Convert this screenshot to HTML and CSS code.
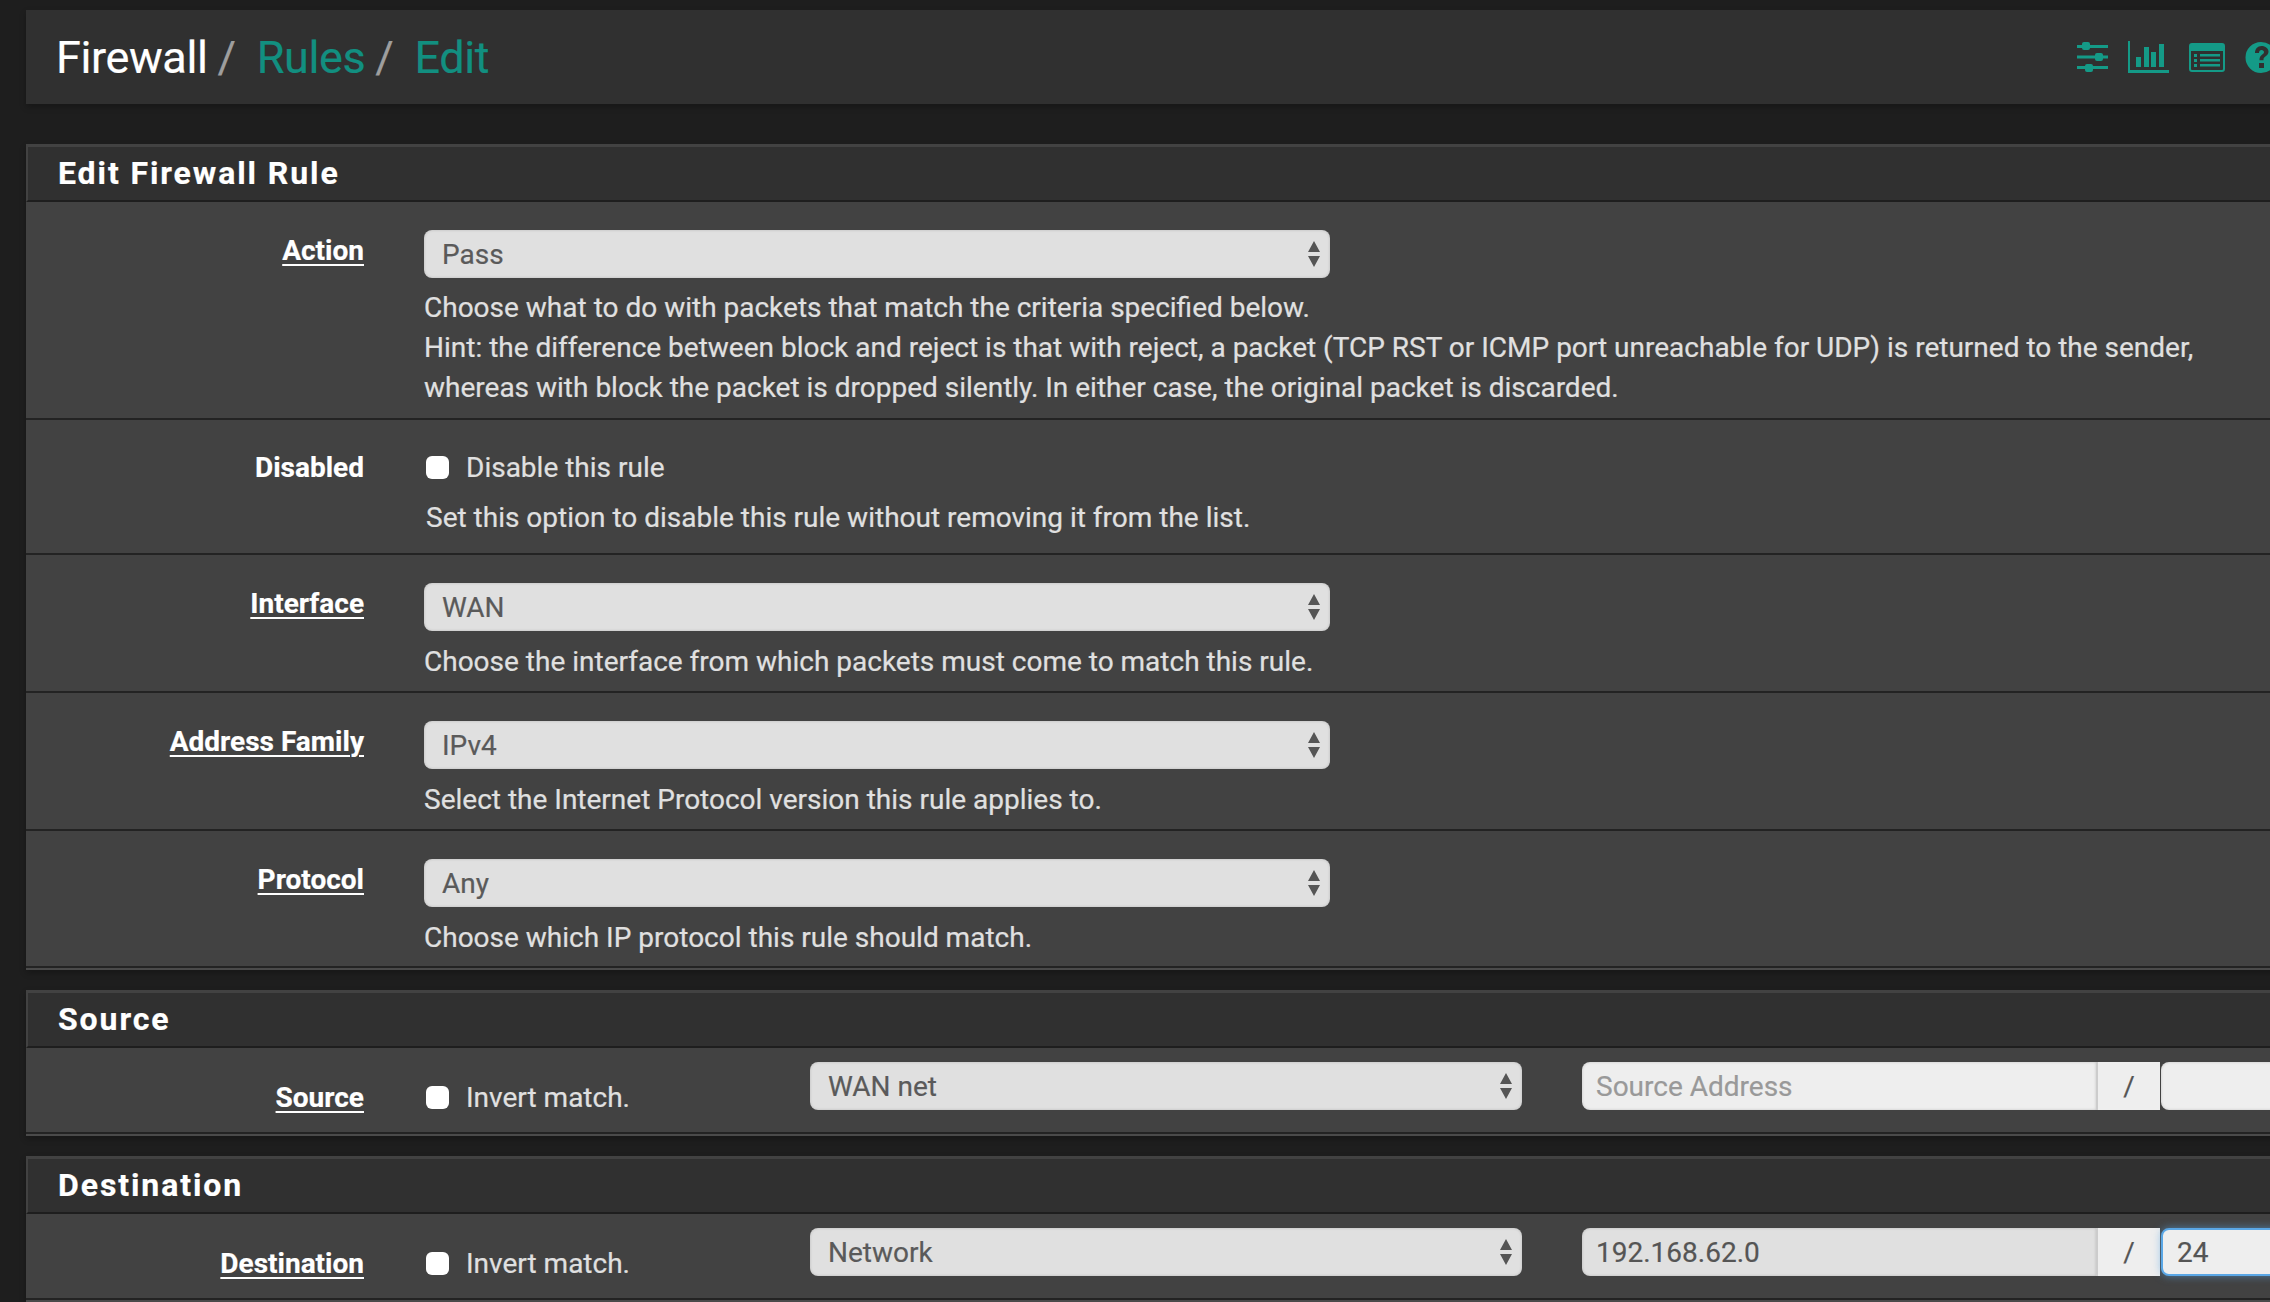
FILE: index.html
```html
<!DOCTYPE html>
<html lang="en">
<head>
<meta charset="utf-8">
<title>Firewall / Rules / Edit</title>
<link rel="stylesheet" href="styles.css">
</head>
<body>
<div class="page">
  <header class="bar">
    <h1 class="crumbs"><span class="crumb-root">Firewall</span><span class="sep">/</span><a class="crumb">Rules</a><span class="sep">/</span><a class="crumb">Edit</a></h1>
    <div class="icons">
      <svg class="ico" width="31" height="30" viewBox="0 0 31 30"><path d="M0 3h31v3H0zM0 13.500h31v3H0zM0 24h31v3H0z"/><rect x="5" y="0" width="8" height="8" rx="2"/><rect x="18" y="11" width="8" height="8" rx="2"/><rect x="8" y="22" width="8" height="8" rx="2"/></svg>
      <svg class="ico" width="41" height="32" viewBox="0 0 41 32"><path d="M0 0h2v29h39v3H0z"/><rect x="8" y="16" width="5" height="10"/><rect x="16" y="6" width="5" height="20"/><rect x="23" y="11" width="5" height="15"/><rect x="31" y="3" width="5" height="23"/></svg>
      <svg class="ico" width="36" height="29" viewBox="0 0 36 29"><path fill-rule="evenodd" d="M3 0h30a3 3 0 0 1 3 3v23a3 3 0 0 1-3 3H3a3 3 0 0 1-3-3V3a3 3 0 0 1 3-3zM2 8v18a1 1 0 0 0 1 1h30a1 1 0 0 0 1-1V8z"/><path d="M5 11h3v3H5zM11 11h20v2.500H11zM5 16h3v3H5zM11 16h20v2.500H11zM5 21h3v3H5zM11 21h20v2.500H11z"/></svg>
      <svg class="ico" width="32" height="31" viewBox="0 0 32 31"><path fill-rule="evenodd" d="M16 0a15.500 15.500 0 1 1 0 31a15.500 15.500 0 0 1 0-31zM10 11h4c0-2 1-3 2.500-3s2.500 1 2.500 2.200c0 2-4.500 3-4.500 7v1h4v-1c0-2.500 5-3.500 5-7.500C23.500 6.500 20.500 4 16.500 4S10 7 10 11zM14 21v5h5v-5z"/></svg>
    </div>
  </header>

  <section class="panel panel-first">
    <h2 class="panel-head">Edit Firewall Rule</h2>
    <div class="row row-action">
      <div class="label"><u>Action</u></div>
      <div class="field">
        <div class="select-wrap select-main">
          <select class="select"><option>Pass</option></select>
          <svg class="arrows" width="14" height="27" viewBox="0 0 14 27"><path d="M7 0l6 11H1zM1 15h12L7 26z"/></svg>
        </div>
        <p class="help help-action">Choose what to do with packets that match the criteria specified below.<br>Hint: the difference between block and reject is that with reject, a packet (TCP RST or ICMP port unreachable for UDP) is returned to the sender,<br>whereas with block the packet is dropped silently. In either case, the original packet is discarded.</p>
      </div>
    </div>
    <div class="row row-disabled">
      <div class="label">Disabled</div>
      <div class="field">
        <label class="check"><input type="checkbox" class="box"><span>Disable this rule</span></label>
        <p class="help help-check">Set this option to disable this rule without removing it from the list.</p>
      </div>
    </div>
    <div class="row">
      <div class="label"><u>Interface</u></div>
      <div class="field">
        <div class="select-wrap select-main">
          <select class="select"><option>WAN</option></select>
          <svg class="arrows" width="14" height="27" viewBox="0 0 14 27"><path d="M7 0l6 11H1zM1 15h12L7 26z"/></svg>
        </div>
        <p class="help">Choose the interface from which packets must come to match this rule.</p>
      </div>
    </div>
    <div class="row">
      <div class="label"><u>Address Family</u></div>
      <div class="field">
        <div class="select-wrap select-main">
          <select class="select"><option>IPv4</option></select>
          <svg class="arrows" width="14" height="27" viewBox="0 0 14 27"><path d="M7 0l6 11H1zM1 15h12L7 26z"/></svg>
        </div>
        <p class="help">Select the Internet Protocol version this rule applies to.</p>
      </div>
    </div>
    <div class="row row-last">
      <div class="label"><u>Protocol</u></div>
      <div class="field">
        <div class="select-wrap select-main">
          <select class="select"><option>Any</option></select>
          <svg class="arrows" width="14" height="27" viewBox="0 0 14 27"><path d="M7 0l6 11H1zM1 15h12L7 26z"/></svg>
        </div>
        <p class="help">Choose which IP protocol this rule should match.</p>
      </div>
    </div>
  </section>

  <section class="panel">
    <h2 class="panel-head">Source</h2>
    <div class="row row-net">
      <div class="label label-net"><u>Source</u></div>
      <div class="field field-net">
        <label class="check check-net"><input type="checkbox" class="box"><span>Invert match.</span></label>
        <div class="select-wrap select-net">
          <select class="select"><option>WAN net</option></select>
          <svg class="arrows" width="14" height="27" viewBox="0 0 14 27"><path d="M7 0l6 11H1zM1 15h12L7 26z"/></svg>
        </div>
        <div class="addr">
          <input class="input input-addr input-light" type="text" placeholder="Source Address">
          <span class="addon">/</span>
          <input class="input input-mask input-light" type="text">
        </div>
      </div>
    </div>
  </section>

  <section class="panel">
    <h2 class="panel-head">Destination</h2>
    <div class="row row-net">
      <div class="label label-net"><u>Destination</u></div>
      <div class="field field-net">
        <label class="check check-net"><input type="checkbox" class="box"><span>Invert match.</span></label>
        <div class="select-wrap select-net">
          <select class="select"><option>Network</option></select>
          <svg class="arrows" width="14" height="27" viewBox="0 0 14 27"><path d="M7 0l6 11H1zM1 15h12L7 26z"/></svg>
        </div>
        <div class="addr">
          <input class="input input-addr" type="text" value="192.168.62.0">
          <span class="addon">/</span>
          <input class="input input-mask input-focus input-light" type="text" value="24">
        </div>
      </div>
    </div>
  </section>
</div>
</body>
</html>
```

FILE: styles.css
```css
* { box-sizing: border-box; }
html, body { margin: 0; padding: 0; height: 1302px; overflow: hidden; background: #1e1e1e; }
body { font-family: Roboto, "Liberation Sans", sans-serif; color: #e0e0e0; font-size: 28px; -webkit-text-stroke: 0.2px; }
.page { width: 2300px; padding: 10px 0 0 26px; }

.bar { height: 94px; background: #303030; display: flex; align-items: center; justify-content: space-between; padding: 0 23px 0 30px; box-shadow: 0 3px 6px rgba(0,0,0,.25); }
.crumbs { margin: 0; font-size: 45px; font-weight: 400; letter-spacing: -0.4px; display: flex; align-items: baseline; color: #fff; }
.crumb-root { color: #fff; }
.crumb { color: #128f80; }
.sep { color: #9e9e9e; margin: 0 21px 0 10px; }
.icons { display: flex; align-items: center; gap: 20px; }
.ico { fill: #149a87; display: block; }

.panel { margin-bottom: 20px; border-bottom: 2px solid #4a4a4a; box-shadow: 0 3px 6px rgba(0,0,0,.25); }
.panel-first { margin-top: 40px; }
.panel-head { margin: 0; height: 58px; line-height: 52px; padding-left: 30px; background: #303030; border-top: 3px solid #424242; border-left: 2px solid #424242; border-bottom: 2px solid #1e1e1e; font-size: 32px; font-weight: 700; letter-spacing: 1.9px; color: #fff; }

.row { display: grid; grid-template-columns: 338px 1fr; column-gap: 60px; background: #424242; padding-top: 28px; height: 138px; border-bottom: 2px solid #232323; }
.row-action { height: 218px; }
.row-disabled { height: 135px; padding-top: 0; }
.row-last { height: 137px; }
.row-net { height: 86px; padding-top: 0; }
.label { text-align: right; font-weight: 700; color: #fff; line-height: 34px; padding-top: 4px; }
.label u { text-underline-offset: 4px; text-decoration-thickness: 2px; }
.row-disabled .label { padding-top: 31px; }
.row .label-net { padding-top: 33px; }

.select-wrap { position: relative; height: 48px; }
.select-main { width: 906px; }
.select { width: 100%; height: 100%; appearance: none; border: 0; border-radius: 8px; background: #e0e0e0; box-shadow: inset 0 0 3px rgba(0,0,0,.18); color: #5a5a5a; font: inherit; padding: 0 18px; }
.arrows { position: absolute; right: 9px; top: 11px; fill: #555; }

.help { margin: 11px 0 0; line-height: 40px; color: #e0e0e0; }
.help-action { margin-top: 10px; }
.row-disabled .help-check { margin: 11px 0 0 2px; }
.check { display: flex; align-items: center; color: #e0e0e0; height: 40px; }
.row-disabled .check { margin-top: 27px; }
.box { appearance: none; width: 23px; height: 23px; margin: 0 17px 0 2px; border-radius: 6px; background: #fff; flex: none; }

.field-net { display: flex; align-items: flex-start; padding-top: 14px; }
.check-net { width: 386px; margin-top: 15px; flex: none; }
.select-net { width: 712px; flex: none; }
.addr { display: flex; margin-left: 60px; }
.input { height: 48px; border: 0; font: inherit; color: #555; background: #e0e0e0; padding: 0 14px; outline: 0; box-shadow: inset 0 0 3px rgba(0,0,0,.18); }
.input::placeholder { color: #999; }
.input-light { background: #eee; }
.input-addr { width: 514px; border-radius: 8px 0 0 8px; }
.input-mask { width: 140px; border-radius: 8px 0 0 8px; margin-left: 1px; }
.input-focus { border: 2px solid #5aa7e6; box-shadow: 0 0 8px rgba(90,167,230,.6); }
.addon { width: 64px; height: 48px; background: #eee; color: #555; border-left: 2px solid #ccc; display: flex; align-items: center; justify-content: center; }
```
